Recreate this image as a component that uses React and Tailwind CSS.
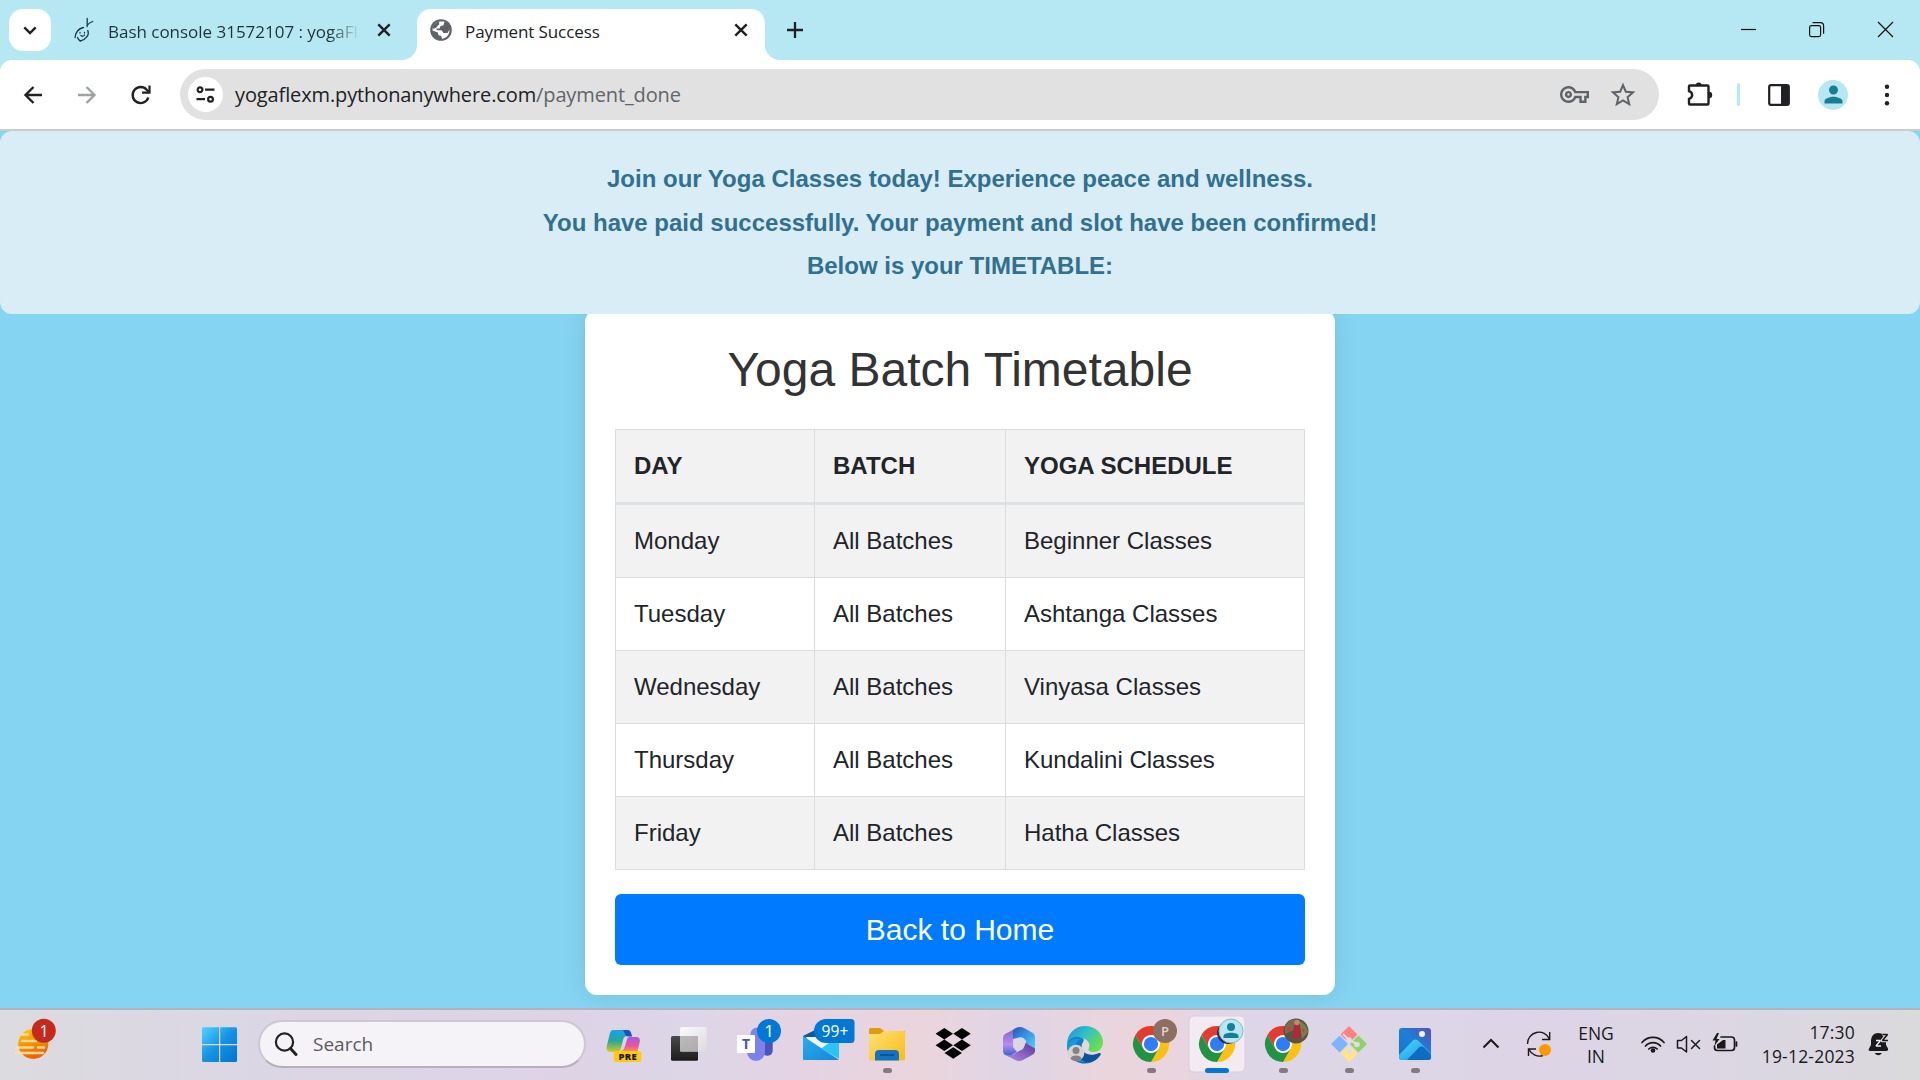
import React from "react";
import { MdOutlineVpnKey, MdStarBorder, MdPerson } from "react-icons/md";

const rows = [
  ["Monday", "Beginner Classes"],
  ["Tuesday", "Ashtanga Classes"],
  ["Wednesday", "Vinyasa Classes"],
  ["Thursday", "Kundalini Classes"],
  ["Friday", "Hatha Classes"],
];

function CloseX({ className }) {
  return (
    <svg className={className} width="14" height="14" viewBox="0 0 14 14" fill="none" stroke="#202124" strokeWidth="2.4">
      <path d="M1.3 1.3 12.7 12.7M12.7 1.3 1.3 12.7" />
    </svg>
  );
}

function Globe({ className }) {
  return (
    <svg className={className} width="22" height="22" viewBox="0 0 22 22">
      <circle cx="11" cy="11" r="10.800" fill="#5f6368" />
      <path d="M10.500 2.500H14.500L13.500 6.200 10.500 7.200 9.500 9.500H6.500L6.800 11.200H11.500L13.500 14H17.500L19.500 10.500C19.800 15.500 16.500 19.300 12 19.700L11 16.800 8.500 16.300 7.800 13.500 2.600 11.500C2.300 6.500 6 2.700 10.500 2.500Z" fill="#fff" />
      <path d="M2.600 9.500C3 6 5.500 3.500 9 2.800L9.300 5.200 6 8.800 4 9.800Z" fill="#5f6368" />
    </svg>
  );
}

function Flare({ flip }) {
  return (
    <svg className={flip ? "self-end -scale-x-100" : "self-end"} width="15" height="15" viewBox="0 0 15 15">
      <path d="M15 0V15H0C8.3 15 15 8.3 15 0Z" fill="#fff" />
    </svg>
  );
}

function TabStrip() {
  return (
    <div className="flex h-[60px] items-stretch bg-[#b5e8f2]">
      <div className="mt-[9px] ml-[9px] flex size-[42px] items-center justify-center rounded-[14px] bg-white">
        <svg width="14" height="9" viewBox="0 0 14 9" fill="none" stroke="#202124" strokeWidth="2.4">
          <path d="M1.3 1.3 7 7 12.7 1.3" />
        </svg>
      </div>
      <svg className="mt-[17px] ml-[22px]" width="24" height="26" viewBox="0 0 24 26" fill="none" stroke="#1c3a42" strokeWidth="1.3" strokeLinecap="round">
        <path d="M14.2 1.5V9.500M14 8.500C15 7 17.500 5.200 19.800 4.500M10.500 10.500C6 11.500 2.500 15 2 20.500M14.800 13.500C16.500 17.500 13.500 22.500 7 24.200M4.500 20.500C5 22 6 23.500 7.500 24.200M7 15.500V16M11.500 15.500V16M8 18.500C9 19.500 10.500 19.500 11.500 18" />
      </svg>
      <div className="ml-[11px] w-[252px] whitespace-nowrap pt-[20px] text-[17px] leading-6 tracking-[-0.020px] text-[#1f3338] [mask-image:linear-gradient(to_right,#000_88%,transparent_100%)]">
        Bash console 31572107 : yogaFl
      </div>
      <CloseX className="mt-[23px] ml-[17px]" />
      <div className="ml-[11px] flex">
        <Flare />
        <div className="mt-[9px] flex w-[348px] rounded-t-[14px] bg-white">
          <Globe className="mt-[10px] ml-[13px]" />
          <div className="ml-[13px] w-[257px] pt-[11px] text-[17px] leading-6 tracking-[-0.1px] text-[#202124]">Payment Success</div>
          <CloseX className="mt-[14px] ml-[12px]" />
        </div>
        <Flare flip />
      </div>
      <svg className="mt-[22px] ml-[7px]" width="16" height="16" viewBox="0 0 16 16" stroke="#202124" strokeWidth="2.300">
        <path d="M8 0V16M0 8H16" />
      </svg>
      <div className="ml-auto flex items-start pt-[21px] pr-[26px]">
        <svg width="154" height="17" viewBox="0 0 154 17" fill="none" stroke="#111" strokeWidth="1.200">
          <path d="M1 8.500H16" />
          <rect x="69.600" y="4.600" width="11" height="11" rx="1.800" />
          <path d="M72.500 1.600H80.500C82.500 1.600 83.600 2.800 83.600 4.800V12.800" />
          <path d="M138 1 153 16M153 1 138 16" />
        </svg>
      </div>
    </div>
  );
}

function Toolbar() {
  return (
    <div className="bg-[#b5e8f2]">
      <div className="flex h-[71px] items-center rounded-t-[12px] border-b-2 border-[#cbcbcb] bg-white">
        <svg className="ml-[23px]" width="130" height="22" viewBox="0 0 130 22" fill="none" strokeWidth="2.400">
          <path d="M19 11H3M10.500 3 2.500 11 10.500 19" stroke="#202124" />
          <path d="M55 11H71M63.500 3 71.500 11 63.500 19" stroke="#a0a1a3" />
          <path d="M125.300 13.500A8 8 0 1 1 123.700 5.800L125.800 8" stroke="#202124" />
          <path d="M126.500 1.500V8.700H119" stroke="#202124" strokeWidth="2.200" />
        </svg>
        <div className="ml-[27px] flex h-[51px] w-[1479px] items-center rounded-full bg-[#e1e1e1]">
          <div className="ml-[8px] flex size-[35px] items-center justify-center rounded-full bg-white">
            <svg width="19" height="17" viewBox="0 0 19 17" fill="none" stroke="#202124" strokeWidth="2.200">
              <circle cx="4" cy="3.700" r="2.400" />
              <path d="M9 3.700H18.500M.5 13.200H9" />
              <circle cx="14.500" cy="13.200" r="2.400" />
            </svg>
          </div>
          <div className="ml-[12px] flex-1 whitespace-nowrap text-[20px] leading-8 tracking-[-0.120px] text-[#202124]">
            yogaflexm.pythonanywhere.com<span className="text-[#62656a]">/payment_done</span>
          </div>
          <MdOutlineVpnKey className="text-[#5f6368]" size={29} />
          <MdStarBorder className="ml-[19px] mr-[21px] text-[#5f6368]" size={30} />
        </div>
        <svg className="ml-[27px] mb-[2px]" width="28" height="28" viewBox="0 0 28 28" fill="none">
          <path d="M4 5.500H21.500C22.200 5.500 22.500 6 22.500 6.500V23.500C22.500 24.200 22 24.500 21.500 24.500H4C3.300 24.500 3 24 3 23.500V18.800C7.200 17.500 7.200 12.500 3 11.200V6.500C3 6 3.300 5.500 4 5.500Z" stroke="#202124" strokeWidth="2.400" />
          <path d="M9.700 5.500A3 3 0 0 1 15.700 5.500ZM23 11.800A3.200 3.200 0 0 1 23 18.200Z" fill="#202124" />
        </svg>
        <div className="ml-[23px] h-[23px] w-[3px] rounded bg-[#b5e8f2]" />
        <svg className="ml-[28px]" width="22" height="22" viewBox="0 0 22 22">
          <rect x="1.200" y="1.200" width="19.600" height="19.600" rx="1.800" fill="none" stroke="#202124" strokeWidth="2.200" />
          <path d="M13 1H20V21H13Z" fill="#202124" />
        </svg>
        <div className="ml-[28px] flex size-[30px] items-center justify-center rounded-full bg-[#b5e8f2]">
          <MdPerson className="text-[#177e96]" size={27} />
        </div>
        <svg className="ml-[36px]" width="6" height="22" viewBox="0 0 6 22" fill="#202124">
          <circle cx="3" cy="2.800" r="2.200" /><circle cx="3" cy="11" r="2.200" /><circle cx="3" cy="19.200" r="2.200" />
        </svg>
      </div>
    </div>
  );
}

function Page() {
  return (
    <main className="flex h-[877px] flex-col items-center overflow-hidden bg-[#85d4f2] font-['Liberation_Sans',Arial,sans-serif] text-[#212529]">
      <div className="relative z-10 flex h-[183px] w-full shrink-0 flex-col items-center rounded-[12px] bg-[#d9edf7] pt-[26px] text-[24px] leading-[43.500px] font-bold text-[#31708f]">
        <p>Join our Yoga Classes today! Experience peace and wellness.</p>
        <p>You have paid successfully. Your payment and slot have been confirmed!</p>
        <p>Below is your TIMETABLE:</p>
      </div>
      <section className="-mt-[4px] h-[685px] w-[750px] rounded-[12px] bg-white px-[30px] pt-[30px] shadow-[0_0_25px_rgba(0,0,0,0.1)]">
        <h1 className="text-center text-[48px] leading-[60px] text-[#333]">Yoga Batch Timetable</h1>
        <div className="mt-[29px] grid grid-cols-[200px_191px_299px] text-[24px]">
          <Row cells={["DAY", "BATCH", "YOGA SCHEDULE"]} head />
          {rows.map(([day, cls], i) => (
            <Row key={day} cells={[day, "All Batches", cls]} shade={i % 2 === 0} />
          ))}
        </div>
        <button className="mt-[24px] h-[71px] w-full rounded-[6px] bg-[#007bff] text-[30px] text-white">Back to Home</button>
      </section>
    </main>
  );
}

function Row({ cells, head, shade }) {
  return cells.map((c, i) => (
    <div
      key={i}
      className={[
        "flex items-center border-[#dbdddf] pl-[18px]",
        i === 0 ? "border-l" : "",
        "border-r",
        head ? "h-[76px] border-t border-b-3 border-b-[#dee2e6] bg-[#f2f2f2] font-bold" : "h-[73px] border-b",
        shade ? "bg-[#f2f2f2]" : "",
      ].join(" ")}
    >
      {c}
    </div>
  ));
}

function Cell({ children, dot, active }) {
  return (
    <svg className="shrink-0" width="66" height="72" viewBox="0 0 66 72">
      {active && <rect x="4" y="8" width="56" height="56" rx="5" fill="#f3eaf3" stroke="#d9cfdc" />}
      {children}
      {dot && <rect x="28" y="60" width="9" height="5" rx="2.500" fill="#85797f" />}
      {active && <rect x="20" y="60" width="24" height="5" rx="2.500" fill="#0078d4" />}
    </svg>
  );
}

function Chrome() {
  return (
    <g transform="translate(14 18) scale(.75)">
      <circle cx="24" cy="24" r="12" fill="#fff" />
      <path fill="#e33b2e" d="M24,12H44.781a23.994,23.994,0,0,0-41.564.003L13.608,30l.009-.002A11.985,11.985,0,0,1,24,12Z" />
      <path fill="#fcc010" d="M34.391,30.003,24,48A23.994,23.994,0,0,0,44.780,12.003H24l-.003.009A11.985,11.985,0,0,1,34.391,30.003Z" />
      <path fill="#229342" d="M13.609,30.003,3.218,12.006A23.994,23.994,0,0,0,24.003,48L34.393,30.003l-.007-.007a11.985,11.985,0,0,1-20.778.007Z" />
      <circle cx="24" cy="24" r="9.500" fill="#2f7cf6" />
    </g>
  );
}

function TaskIcons() {
  return (
    <div className="flex">
      <svg width="0" height="0" className="absolute">
        <defs>
          <linearGradient id="co1" x1="0" y1="0" x2="0" y2="1"><stop offset="0" stopColor="#1aa0e8" /><stop offset=".5" stopColor="#25a99a" /><stop offset="1" stopColor="#d8c820" /></linearGradient>
          <linearGradient id="co2" x1="0" y1="0" x2="0" y2="1"><stop offset="0" stopColor="#a658e8" /><stop offset=".6" stopColor="#e8559a" /><stop offset="1" stopColor="#f89060" /></linearGradient>
          <linearGradient id="dk" x1="0" y1="0" x2="0" y2="1"><stop offset="0" stopColor="#4a4a4a" /><stop offset="1" stopColor="#1c1c1c" /></linearGradient>
          <linearGradient id="lt" x1="0" y1="0" x2="1" y2="1"><stop offset="0" stopColor="#fff" /><stop offset="1" stopColor="#dcdcdc" /></linearGradient>
          <linearGradient id="ml" x1="0" y1="0" x2="1" y2="1"><stop offset="0" stopColor="#2aaef0" /><stop offset="1" stopColor="#1486d8" /></linearGradient>
          <linearGradient id="fd" x1="0" y1="0" x2="1" y2="1"><stop offset="0" stopColor="#ffe07a" /><stop offset="1" stopColor="#fbbc10" /></linearGradient>
          <linearGradient id="m1" x1="0" y1="0" x2="0" y2="1"><stop offset="0" stopColor="#7a60c8" /><stop offset=".6" stopColor="#b98cf0" /><stop offset="1" stopColor="#2a62c8" /></linearGradient>
          <linearGradient id="m2" x1="0" y1="0" x2="1" y2="1"><stop offset="0" stopColor="#2b55b8" /><stop offset=".5" stopColor="#3a98e8" /><stop offset="1" stopColor="#58d8f8" /></linearGradient>
          <linearGradient id="m3" x1="1" y1="0" x2="0" y2="1"><stop offset="0" stopColor="#5b3a98" /><stop offset="1" stopColor="#b58ae8" /></linearGradient>
          <linearGradient id="e1" x1="0" y1="0" x2="1" y2=".6"><stop offset="0" stopColor="#1a90d8" /><stop offset=".5" stopColor="#30c0c8" /><stop offset="1" stopColor="#6be04a" /></linearGradient>
          <linearGradient id="e2" x1="0" y1="0" x2="1" y2="1"><stop offset="0" stopColor="#1388d0" /><stop offset="1" stopColor="#0c60b0" /></linearGradient>
          <linearGradient id="ph" x1="0" y1="1" x2="1" y2="0"><stop offset="0" stopColor="#1472c8" /><stop offset=".5" stopColor="#1a80d8" /><stop offset="1" stopColor="#5a50b8" /></linearGradient>
          <linearGradient id="ph2" x1="0" y1="0" x2="1" y2="1"><stop offset="0" stopColor="#50dcff" /><stop offset="1" stopColor="#1690e0" /></linearGradient>
        </defs>
      </svg>
      <Cell>
        <path d="M22 22H36C39 22 40 24 41 28H36C34 28 33 29 32 32L30 40C29 43 28 44 25 44H20C16 44 15 41 16 37L18.500 27C19.300 23.500 20 22 22 22Z" fill="url(#co1)" />
        <path d="M32 22H37C39.500 22 40 25 41 28.500H37C34.500 28.500 34 25 32 22Z" fill="#1a50c8" />
        <path d="M39 29H45C49 29 49.500 32 48.500 35L46.500 43.500H29C32 43 33 41 34 38L36 31.500C36.500 29.500 37.500 29 39 29Z" fill="url(#co2)" />
        <rect x="22.700" y="43" width="27.500" height="11" rx="2.500" fill="#ffc90e" />
        <text x="36.700" y="52" textAnchor="middle" fontSize="9.500" fontWeight="800" letterSpacing=".3" fill="#1a1a1a">PRE</text>
      </Cell>
      <Cell>
        <rect x="14" y="28" width="27" height="24.700" rx="1.500" fill="url(#dk)" />
        <rect x="23" y="19" width="26.700" height="24.700" rx="1.500" fill="url(#lt)" opacity=".85" />
        <path d="M23 28H41V43.700H23Z" fill="#8e8e8e" opacity=".45" />
      </Cell>
      <Cell>
        <circle cx="34" cy="26" r="6.500" fill="#7b83eb" />
        <path d="M38 31H49.700V42C49.700 46 47 48.500 43 47.500L38 46Z" fill="#4b53bc" />
        <path d="M24 31H42V44A9 9 0 0 1 24 44Z" fill="#7b83eb" />
        <rect x="14" y="27" width="18" height="18" rx="1" fill="#fff" />
        <text x="23" y="41" textAnchor="middle" fontSize="14" fontWeight="700" fill="#4b53bc">T</text>
        <circle cx="46" cy="23" r="12" fill="#0078d4" />
        <text x="46" y="29" textAnchor="middle" fontSize="17" fill="#fff">1</text>
      </Cell>
      <Cell>
        <path d="M14 28 26 22H38L50 28V36H14Z" fill="#0c5aa0" />
        <path d="M17 29H47V42H22Z" fill="#f2f4f8" />
        <path d="M14 28 32 40 50 52H15C14.300 52 14 51.500 14 51Z" fill="url(#ml)" />
        <path d="M50 28V51L32 40.500Z" fill="#2cc4f4" />
        <path d="M37 11H62Q65.500 11 65.500 14.500V31.500Q65.500 35 62 35H37A12 12 0 0 1 37 11Z" fill="#0078d4" />
        <text x="46" y="28.500" textAnchor="middle" fontSize="15.500" letterSpacing=".2" fill="#fff">99+</text>
      </Cell>
      <Cell dot>
        <path d="M14 21.500Q14 20 15.500 20H25L29 23H50V30H14Z" fill="#e09c10" />
        <path d="M14 26H25L29 23H49Q50 23 50 24.500V51Q50 52.500 48.500 52.500H15.500Q14 52.500 14 51Z" fill="url(#fd)" />
        <path d="M20 52.500V46Q20 42 24 42H40Q44 42 44 46V52.500Z" fill="#1272c4" />
        <path d="M25 47H39" stroke="#0b4a8a" strokeWidth="1.500" />
      </Cell>
      <Cell>
        <path d="M23.300 20 32 25.700 23.300 31.400 14.600 25.700ZM41 20 49.700 25.700 41 31.400 32.300 25.700ZM23.300 31.600 32 37.300 23.300 43 14.600 37.300ZM41 31.600 49.700 37.300 41 43 32.300 37.300ZM32.200 39.300 40.900 45 32.200 50.700 23.500 45Z" fill="#000" />
      </Cell>
      <Cell>
        <path d="M32 18.700 18 26Q16 27.300 16 30V43Q16 46 18.500 47L22 48.500 30 44 26 39V31Z" fill="url(#m1)" />
        <path d="M26 31V22Q32 17 37 20L46 25Q48 26.500 48 29V43L39 38V33Q36 28 32 29.500Z" fill="url(#m2)" />
        <path d="M38.500 35 48 40.500V43Q48 45 46 46.500L36 52Q32 54 28 52L18 46.500Q25 49 30 44L36 41Z" fill="url(#m3)" />
        <circle cx="32" cy="36" r="5.800" fill="#dcd5e5" />
      </Cell>
      <Cell>
        <path d="M14 36A18 18 0 0 1 32 18C43 18 50 26 50 34 50 40 46 44 41 44 37 44 35 42.500 35.500 41 38 37 35.500 31.500 29 30 22 28.500 16 31 14 36Z" fill="url(#e1)" />
        <path d="M14 37C15 30 22 27.500 28 29.500 33 31 30 34 28.500 37 26 46 35 50 45 46.500 48 45.500 48 46 47 47.500A18 18 0 0 1 14 37Z" fill="url(#e2)" />
        <path d="M23 36C20 44 24 52 33 54 25 55 14 49 14 37 17 31 24 30 30 31 26 31 24 33 23 36Z" fill="#1a98dc" />
        <path d="M28.500 37C28 46 37 49 46 45 48 44.500 48 46 47 47.500 43 53 38 54 33 54 24 51 24 42 28.500 37Z" fill="#0e539a" />
        <circle cx="23" cy="45" r="8.300" fill="#d4d4d2" />
        <circle cx="23" cy="42.500" r="3.500" fill="#85827f" />
        <path d="M17.500 50.500C18 46.500 28 46.500 28.500 50.500 26 54 20 54 17.500 50.500Z" fill="#85827f" />
      </Cell>
      <Cell dot>
        <Chrome />
        <circle cx="46" cy="23" r="12" fill="#8d6e63" />
        <text x="46" y="27.500" textAnchor="middle" fontSize="13" fontWeight="600" fill="#e0d5d0">P</text>
      </Cell>
      <Cell active>
        <Chrome />
        <circle cx="43" cy="25" r="11" fill="#3a2448" />
        <circle cx="46" cy="23" r="12" fill="#b5e8f2" stroke="#8fb4bd" />
        <circle cx="46" cy="19" r="4" fill="#177e96" />
        <path d="M38.500 30V28C38.500 23.500 53.500 23.500 53.500 28V30Z" fill="#177e96" />
      </Cell>
      <Cell dot>
        <Chrome />
        <circle cx="45" cy="23" r="12.500" fill="#5b5440" />
        <path d="M34 18Q40 10 45 12L43 22 34 26Z" fill="#7c6a48" />
        <path d="M48 13Q56 16 57 24L51 31Z" fill="#75804f" />
        <path d="M43 17 49 16 50 30H41Z" fill="#b0283a" />
        <circle cx="46" cy="14.500" r="2.800" fill="#c08a70" />
        <path d="M36 20 39 19 39 24ZM51 20 54 22 52 25Z" fill="#c43a48" />
      </Cell>
      <Cell dot>
        <g transform="rotate(45 32 36)">
          <rect x="19.300" y="23.300" width="12" height="12" rx="1" fill="#ff8080" />
          <rect x="32.700" y="23.300" width="12" height="12" rx="1" fill="#8cd464" />
          <rect x="19.300" y="36.700" width="12" height="12" rx="1" fill="#80b3ff" />
          <rect x="32.700" y="36.700" width="12" height="12" rx="1" fill="#ffe680" />
        </g>
        <path d="M26 26 32 32V45M32 32 40 36" fill="none" stroke="#e4dbe6" strokeWidth="2" />
        <circle cx="32" cy="32" r="2.800" fill="#e4dbe6" /><circle cx="40" cy="36.500" r="2.800" fill="#e4dbe6" /><circle cx="32" cy="43.500" r="2.800" fill="#e4dbe6" />
      </Cell>
      <Cell dot>
        <rect x="16" y="20" width="32" height="32" rx="3" fill="url(#ph)" />
        <path d="M16 47 30 32.500Q32.500 30.500 35 32.500L48 45V49Q48 52 45 52H19Q16 52 16 49Z" fill="url(#ph2)" />
        <path d="M24 52 36 39.500Q38.500 37.500 41 39.500L48 46.500V49Q48 52 45 52Z" fill="#0f6cc4" />
        <circle cx="39" cy="26" r="3" fill="#f4f0f4" />
      </Cell>
    </div>
  );
}

function Tray() {
  return (
    <>
      <svg className="ml-[32px]" width="76" height="72" viewBox="0 0 76 72" fill="none" stroke="#1a1a1a">
        <path d="M2.500 39.500 10 32 17.500 39.500" strokeWidth="2" />
        <path d="M46.500 36A11.500 11.500 0 0 1 68.500 31M68.700 24V31.500H61M62 47.500A11.500 11.500 0 0 1 48 41.500M47.500 48V41H55" strokeWidth="1.400" />
        <circle cx="64" cy="42" r="6" fill="#ff9800" stroke="none" />
      </svg>
      <div className="ml-[14px] flex w-[50px] flex-col items-center pt-[14px] text-[17.500px] leading-[23px] text-[#1a1a1a]">
        <span>ENG</span>
        <span>IN</span>
      </div>
      <svg className="ml-[18px]" width="110" height="72" viewBox="0 0 110 72" fill="none" stroke="#1a1a1a" strokeWidth="1.800" strokeLinecap="round">
        <path d="M3 34.500A14.500 14.500 0 0 1 25 34.500M6.500 38A10 10 0 0 1 21.500 38M9.800 41A6 6 0 0 1 18.200 41" strokeWidth="1.700" />
        <circle cx="14" cy="42.500" r="2.300" fill="#1a1a1a" stroke="none" />
        <path d="M38.500 32.500H42.500L47.500 28.500V44L42.500 40H38.500Z" strokeWidth="1.500" strokeLinejoin="round" />
        <path d="M52.500 32.500 60.500 40.500M60.500 32.500 52.500 40.500" strokeWidth="1.500" />
        <path d="M82 29H92.500Q95.500 29 95.500 32V39.500Q95.500 42.500 92.500 42.500H78.500Q75.500 42.500 75.500 39.500V38M97.500 34V38" strokeWidth="1.700" />
        <path d="M78 40.500V36.500L84 32H86.500V40.500ZM78 25 73.500 32.500H76.500L75.500 38 80.500 31H77.500L80 25Z" fill="#1a1a1a" stroke="none" />
      </svg>
      <div className="ml-auto flex flex-col items-end pt-[12px] text-[17.500px] leading-[24px] tracking-[0.200px] text-[#1a1a1a]">
        <span>17:30</span>
        <span>19-12-2023</span>
      </div>
      <svg className="ml-[12px] mr-[29px]" width="24" height="72" viewBox="0 0 24 72" fill="#1a1a1a">
        <path d="M2 40.500 4 37V32Q5 25 11 25 18 25 19 32V37L21 40.500Q21.500 43 19 43H3Q1 43 2 40.500ZM7.500 45H15Q11.300 49.500 7.500 45Z" />
        <path d="M9 32.500H13.500L9 38H14" fill="none" stroke="#eee" strokeWidth="1.400" strokeLinejoin="bevel" />
        <path d="M15.500 26.500H20.500L15.500 32.500H21" fill="none" stroke="#dedae2" strokeWidth="3.600" strokeLinejoin="round" />
        <path d="M15.500 26.500H20.500L15.500 32.500H21" fill="none" stroke="#1a1a1a" strokeWidth="1.700" strokeLinejoin="bevel" />
      </svg>
    </>
  );
}

function Taskbar() {
  return (
    <footer className="flex h-[72px] bg-[linear-gradient(90deg,#dcdbdf_0%,#dbd7e3_10%,#ddd3e5_30%,#dcd6e6_36%,#e5d3e4_42%,#ead5dc_48%,#dfd5e5_53%,#ead5dc_58%,#ead4de_61%,#dcd6e6_64%,#dcd6e6_75%,#ddd4e6_79%,#dbd7e2_92%,#dad9db_100%)] shadow-[inset_0_2px_0_#b6b2bd]">
      <svg width="240" height="72" viewBox="0 0 240 72">
        <defs>
          <linearGradient id="sun" x1="0" y1="0" x2=".3" y2="1"><stop offset="0" stopColor="#ffcb08" /><stop offset="1" stopColor="#ea6404" /></linearGradient>
          <linearGradient id="win" x1="0" y1="0" x2="1" y2="1"><stop offset="0" stopColor="#4fd2ff" /><stop offset=".5" stopColor="#1592e2" /><stop offset="1" stopColor="#0074d0" /></linearGradient>
        </defs>
        <circle cx="33.300" cy="36" r="15" fill="url(#sun)" />
        <path d="M22 26.500H28M22 33H36M16 39.500H33M38 39.500H44M16 45H43" stroke="#f8e2a8" strokeWidth="2.500" strokeLinecap="round" opacity=".9" />
        <circle cx="43.800" cy="22.700" r="12" fill="#c42b1c" />
        <text x="44" y="28.500" textAnchor="middle" fontSize="16" fill="#fff">1</text>
        <path d="M203.500 19.300H219V36H202V20.800Q202 19.300 203.500 19.300ZM220.200 19.300H235.500Q237 19.300 237 20.800V36H220.200ZM202 37.300H219V54H203.500Q202 54 202 52.500ZM220.200 37.300H237V52.500Q237 54 235.500 54H220.200Z" fill="url(#win)" />
      </svg>
      <div className="mt-[12px] ml-[18px] flex h-[48px] w-[328px] items-center rounded-full border-2 border-[#cdc7d4] border-b-[#b5b0bb] bg-[#f5f3f8]">
        <svg className="ml-[14px]" width="24" height="24" viewBox="0 0 24 24" fill="none" stroke="#222">
          <circle cx="10.500" cy="10" r="8.600" strokeWidth="2.200" />
          <path d="M16.500 16.500 22 22.500" strokeWidth="3" strokeLinecap="round" />
        </svg>
        <span className="ml-[15px] text-[19px] text-[#5c5a60]">Search</span>
      </div>
      <div className="ml-[5px]"><TaskIcons /></div>
      <Tray />
    </footer>
  );
}

export default function App() {
  return (
    <div className="h-[1080px] w-[1920px] overflow-hidden font-['Open_Sans','Noto_Sans',sans-serif]">
      <TabStrip />
      <Toolbar />
      <Page />
      <Taskbar />
    </div>
  );
}
